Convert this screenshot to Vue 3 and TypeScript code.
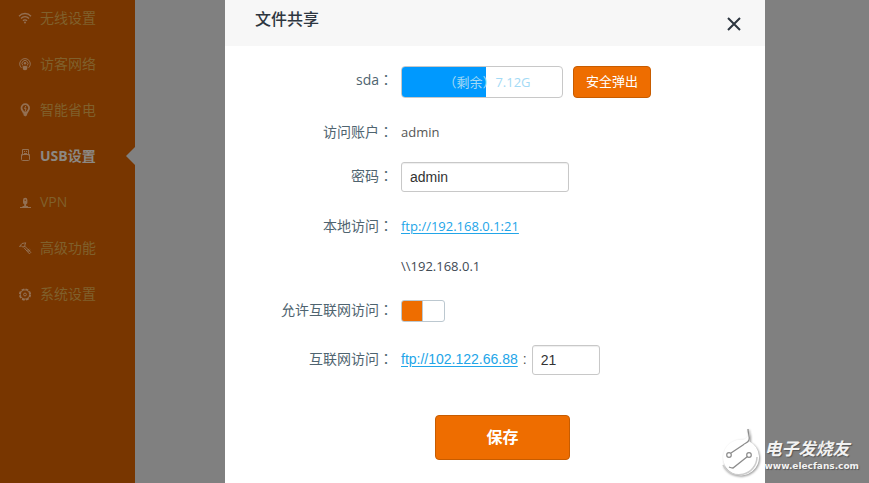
<script setup lang="ts">
import { ref } from 'vue'

type IconName = 'wifi' | 'guest' | 'power' | 'usb' | 'vpn' | 'tools' | 'system'

interface MenuItem {
  icon: IconName
  label: string
}

const menu: MenuItem[] = [
  { icon: 'wifi', label: '无线设置' },
  { icon: 'guest', label: '访客网络' },
  { icon: 'power', label: '智能省电' },
  { icon: 'usb', label: 'USB设置' },
  { icon: 'vpn', label: 'VPN' },
  { icon: 'tools', label: '高级功能' },
  { icon: 'system', label: '系统设置' },
]

const active = ref<IconName>('usb')
const password = ref('admin')
const port = ref('21')
const internetAccess = ref(true)
const usedPercent = ref(52.5)
</script>

<template>
  <div class="page">
    <nav class="sidebar">
      <a
        v-for="item in menu"
        :key="item.icon"
        href="#"
        class="item"
        :class="{ active: item.icon === active }"
        @click.prevent="active = item.icon"
      >
        <svg class="icon" viewBox="0 0 14 14" fill="none" stroke="currentColor" aria-hidden="true">
          <g v-if="item.icon === 'wifi'" stroke-width="1.3">
            <path d="M1 5.2C4.3 1.6 9.7 1.6 13 5.2M3 7.5c2.2-2.4 5.8-2.4 8 0M5 9.7c1.1-1.2 2.9-1.2 4 0" />
            <circle cx="7" cy="11.6" r="1" fill="currentColor" stroke="none" />
          </g>
          <g v-else-if="item.icon === 'guest'">
            <path d="M3.4 10.800A5.300 5.300 0 1 1 10.600 10.800M4.800 8.500A3 3 0 1 1 9.200 8.500" />
            <circle cx="7" cy="6.300" r="1.200" fill="currentColor" stroke="none" />
            <path d="M4.500 9.500q2.500-1.500 5 0L9 12.500q-2 1.500-4 0z" fill="currentColor" stroke="none" />
          </g>
          <g v-else-if="item.icon === 'power'">
            <path d="M5.500 9.500C5.200 8 3.500 7.300 3.500 5a3.800 3.800 0 0 1 7.600 0c0 2.300-1.700 3-2 4.500z" stroke-width="1.800" />
            <path d="M7.800 3 6.500 5.600h1.600L7 8.500" />
            <path d="M5.500 10h3.600v2.300l-1.800 1.200-1.800-1.200z" fill="currentColor" stroke="none" />
          </g>
          <g v-else-if="item.icon === 'usb'">
            <path d="M4.500 6.500v-6h6v6M6 2.500h1M8 2.500h1M6 4.500h3M3.500 5.500h8v5q0 1-1 1h-6q-1 0-1-1z" />
          </g>
          <g v-else-if="item.icon === 'vpn'">
            <path d="M5 5a2.200 2.200 0 0 1 4.400 0v2.500q0 1.500-1.200 1.500v2h-2V9Q5 9 5 7.500z" fill="currentColor" stroke="none" />
            <path d="M2 12.500h11M4.500 11.500h5.400" />
            <path d="M7.200 4.500V6" stroke="#783600" />
          </g>
          <g v-else-if="item.icon === 'tools'">
            <path d="M1.500 5.500 4 2.500l3.800-.7-1 2.200L7 5.300 4.500 6 3.500 4.800z" />
            <path d="m6.800 5.200 6 6.200-1.400 1.400-5.500-6.200M9.300 9.500l2-1.500M10.300 10.500l2-1.500" />
          </g>
          <g v-else>
            <circle cx="7" cy="7.500" r="5.300" stroke-width="1.600" stroke-dasharray="2.800 1.363" />
            <circle cx="7" cy="7.500" r="4.600" stroke-width="1" />
            <circle cx="7" cy="7.500" r="1.400" />
          </g>
        </svg>
        <span>{{ item.label }}</span>
      </a>
    </nav>

    <main class="backdrop">
      <section class="dialog" role="dialog" aria-labelledby="dialog-title">
        <header class="head">
          <h1 id="dialog-title">文件共享</h1>
          <button class="close" type="button" aria-label="关闭">
            <svg viewBox="0 0 14 14" fill="none" stroke="currentColor" stroke-width="2" aria-hidden="true">
              <path d="M1 1l12 12M13 1 1 13" />
            </svg>
          </button>
        </header>

        <form class="form" @submit.prevent>
          <div class="row disk-row">
            <span class="label">sda<i>：</i></span>
            <div class="value">
              <div class="disk">
                <div class="used" :style="{ width: usedPercent + '%' }"></div>
                <span class="free">（剩余）7.12G</span>
              </div>
              <button class="eject" type="button">安全弹出</button>
            </div>
          </div>

          <div class="row">
            <span class="label">访问账户<i>：</i></span>
            <div class="value">admin</div>
          </div>

          <div class="row field-row">
            <label class="label" for="password">密码<i>：</i></label>
            <div class="value"><input id="password" v-model="password" class="text" type="text" /></div>
          </div>

          <div class="row">
            <span class="label">本地访问<i>：</i></span>
            <div class="value"><a class="link" href="ftp://192.168.0.1:21">ftp://192.168.0.1:21</a></div>
          </div>

          <div class="row path-row">
            <div class="value path">\\192.168.0.1</div>
          </div>

          <div class="row switch-row">
            <label class="label" for="internet">允许互联网访问<i>：</i></label>
            <div class="value"><input id="internet" v-model="internetAccess" class="switch" type="checkbox" /></div>
          </div>

          <div class="row port-row">
            <label class="label" for="port">互联网访问<i>：</i></label>
            <div class="value">
              <a class="link remote" href="ftp://102.122.66.88">ftp://102.122.66.88</a>
              <span class="colon">:</span>
              <input id="port" v-model="port" class="text port" type="text" />
            </div>
          </div>

          <button class="save" type="submit">保存</button>
        </form>
      </section>
    </main>

    <div class="watermark">
      <svg class="mark" viewBox="0 0 42 54" fill="none" aria-hidden="true">
        <path d="M28 2c1 4 3 8 1.500 12.500A18 18 0 1 1 23 12.500c5-1 5.500-5 5-10.500z" fill="#fff" />
        <path d="M37 30A18 18 0 0 1 3 38" stroke="#ccc" stroke-width="1.500" />
        <path d="M28 2c0 4 2 8 1 11-1 3-4 3-6 5L11 26M27.500 29.500 13 41q-2 0-4-1" stroke="#8c8c8c" stroke-width="1.300" />
        <circle cx="9" cy="28" r="2.300" stroke="#8c8c8c" stroke-width="1.200" />
        <circle cx="29" cy="28" r="2.300" stroke="#8c8c8c" stroke-width="1.200" />
      </svg>
      <div class="brand">
        <strong>电子发烧友</strong>
        <span>www.elecfans.com</span>
      </div>
    </div>
  </div>
</template>

<style>
body {
  margin: 0;
}
</style>

<style scoped>
.page {
  position: relative;
  display: flex;
  min-height: 100vh;
  overflow: hidden;
  background: #808080;
  color: #555;
  font: 13px/20px "Open Sans", "Noto Sans CJK SC", sans-serif;
}

.sidebar {
  flex: 0 0 135px;
  margin-top: -5px;
  background: #783600;
}

.item {
  position: relative;
  display: flex;
  align-items: center;
  gap: 8px;
  height: 46px;
  padding-left: 18px;
  color: #80602c;
  font-size: 14px;
  text-decoration: none;
}

.icon {
  width: 14px;
  height: 14px;
  color: #947052;
}

.active {
  color: #8c8883;
  font-weight: 700;
}

.active::after {
  content: "";
  position: absolute;
  top: 14px;
  right: 0;
  border: solid transparent;
  border-width: 9px 9px 9px 0;
  border-right-color: #808080;
}

.backdrop {
  flex: 1;
  display: flex;
  padding: 0 104px 0 90px;
}

.dialog {
  flex: 1;
  max-width: 720px;
  background: #fff;
}

.head {
  display: flex;
  justify-content: space-between;
  align-items: center;
  height: 46px;
  padding: 0 23px 0 30px;
  background: #f7f7f7;
  color: #2d3640;
}

h1 {
  margin: 0;
  padding-bottom: 8px;
  font-size: 16px;
  font-weight: 500;
  line-height: 20px;
}

.close {
  width: 16px;
  height: 16px;
  margin-top: 2px;
  padding: 1px;
  border: 0;
  background: none;
  color: #2d3640;
}

.close svg {
  display: block;
}

.form {
  display: flex;
  flex-direction: column;
  gap: 24px;
  padding: 20px 0 23px;
}

.row {
  display: grid;
  grid-template-columns: 168px 1fr;
  column-gap: 8px;
  align-items: center;
}

.field-row,
.path-row {
  margin-top: -4px;
}

.port-row {
  margin-top: -1px;
}

.label {
  color: #4f6470;
  font-size: 14px;
  line-height: 16px;
  text-align: right;
}

.field-row .label,
.switch-row .label,
.port-row .label {
  padding-bottom: 2px;
}

.disk-row .label {
  padding-bottom: 4px;
}

.label i {
  font-family: "Noto Sans CJK TC", sans-serif;
  font-style: normal;
  line-height: 1;
}

.value {
  grid-column: 2;
  display: flex;
  align-items: center;
}

.path {
  color: #3f4a54;
}

.disk {
  position: relative;
  box-sizing: border-box;
  width: 162px;
  height: 32px;
  margin-right: 10px;
  overflow: hidden;
  border: 1px solid #c8c8c8;
  border-radius: 4px;
}

.used {
  height: 100%;
  background: #0099fe;
}

.free {
  position: absolute;
  inset: 0;
  padding-left: 10px;
  color: #a3daf5;
  line-height: 30px;
  text-align: center;
  white-space: nowrap;
}

.eject,
.save {
  border: 1px solid #c75c00;
  border-radius: 4px;
  background: #ee6d00;
  color: #fff;
  font-family: inherit;
}

.eject {
  width: 78px;
  height: 32px;
  padding: 0 0 3px;
  font-size: 13px;
}

.text {
  box-sizing: border-box;
  width: 168px;
  height: 30px;
  padding: 0 8px;
  border: 1px solid #c8c8c8;
  border-radius: 3px;
  background: #fff;
  box-shadow: inset 0 1px 1px #eee;
  color: #333;
  font: 14px "Liberation Sans", sans-serif;
}

.port {
  width: 68px;
}

.link {
  color: #22a5e8;
  text-decoration: underline;
  text-underline-offset: 2px;
}

.remote,
.colon {
  padding-bottom: 2px;
  font: 14px/20px "Liberation Sans", sans-serif;
}

.colon {
  padding-inline: 5px;
}

.switch {
  appearance: none;
  box-sizing: border-box;
  width: 44px;
  height: 22px;
  margin: 0;
  border: 1px solid #bcc8d0;
  border-radius: 3px;
  background: #fff;
}

.switch:checked {
  background: linear-gradient(90deg, #ee6d00 20px, #bcc8d0 20px, #bcc8d0 21px, #fff 21px);
}

.save {
  align-self: center;
  width: 135px;
  height: 45px;
  margin: 16px 0 0 15px;
  padding: 0 0 3px;
  font-size: 16px;
  font-weight: 700;
}

.watermark {
  position: absolute;
  right: 10px;
  bottom: 2px;
  display: flex;
  align-items: flex-end;
  gap: 3px;
  pointer-events: none;
}

.mark {
  width: 42px;
  height: 54px;
  filter: drop-shadow(1px 1px 1px #999);
}

.brand {
  display: flex;
  flex-direction: column;
  padding-bottom: 8px;
  color: #f2f2f2;
  text-shadow: 1px 1px 1px #555;
}

.brand strong {
  font: italic 700 17px/22px "Noto Sans CJK SC", sans-serif;
}

.brand span {
  font: 700 9px/14px "DejaVu Sans", sans-serif;
}
</style>
